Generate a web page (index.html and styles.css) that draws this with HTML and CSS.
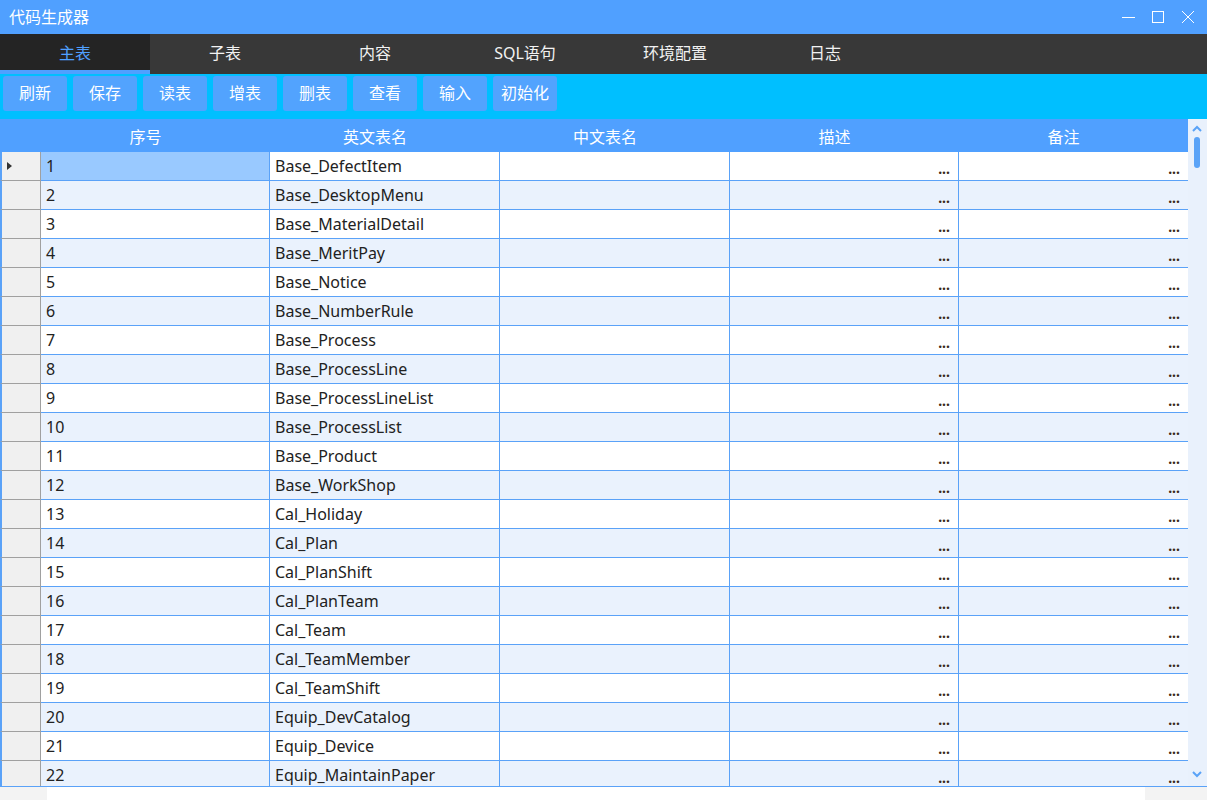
FILE: index.html
```html
<!DOCTYPE html>
<html lang="zh-CN">
<head>
<meta charset="utf-8">
<title>代码生成器</title>
<link rel="stylesheet" href="styles.css">
</head>
<body>
<div class="window">
  <header class="titlebar">
    <span class="title">代码生成器</span>
    <div class="controls">
      <svg class="ctl" width="14" height="14" viewBox="0 0 14 14"><path d="M1 7.5H14" stroke="#fff" stroke-width="1"/></svg>
      <svg class="ctl" width="14" height="14" viewBox="0 0 14 14"><rect x="1.5" y="1.5" width="11" height="11" fill="none" stroke="#fff" stroke-width="1"/></svg>
      <svg class="ctl" width="14" height="14" viewBox="0 0 14 14"><path d="M1 1L13 13M13 1L1 13" stroke="#fff" stroke-width="1"/></svg>
    </div>
  </header>
  <nav class="tabs">
    <div class="tab active">主表</div>
    <div class="tab">子表</div>
    <div class="tab">内容</div>
    <div class="tab">SQL语句</div>
    <div class="tab">环境配置</div>
    <div class="tab">日志</div>
  </nav>
  <div class="toolbar">
    <button class="btn">刷新</button>
    <button class="btn">保存</button>
    <button class="btn">读表</button>
    <button class="btn">增表</button>
    <button class="btn">删表</button>
    <button class="btn">查看</button>
    <button class="btn">输入</button>
    <button class="btn">初始化</button>
  </div>
  <div class="grid">
    <div class="grid-main">
      <div class="row head">
        <div class="cell rh"></div>
        <div class="cell">序号</div>
        <div class="cell">英文表名</div>
        <div class="cell">中文表名</div>
        <div class="cell">描述</div>
        <div class="cell">备注</div>
      </div>
      <div class="body" id="body"></div>
    </div>
    <div class="vscroll">
      <svg class="chev" width="12" height="8" viewBox="0 0 12 8"><path d="M2 6L6 2L10 6" fill="none" stroke="#5aa3f7" stroke-width="2"/></svg>
      <div class="thumb"></div>
      <div class="track"></div>
      <svg class="chev" width="12" height="8" viewBox="0 0 12 8"><path d="M2 2L6 6L10 2" fill="none" stroke="#5aa3f7" stroke-width="2"/></svg>
    </div>
  </div>
  <div class="footer">
    <div class="f-left"></div>
    <div class="f-mid"></div>
    <div class="f-right"></div>
  </div>
</div>
<script>
var names = ["Base_DefectItem","Base_DesktopMenu","Base_MaterialDetail","Base_MeritPay","Base_Notice","Base_NumberRule","Base_Process","Base_ProcessLine","Base_ProcessLineList","Base_ProcessList","Base_Product","Base_WorkShop","Cal_Holiday","Cal_Plan","Cal_PlanShift","Cal_PlanTeam","Cal_Team","Cal_TeamMember","Cal_TeamShift","Equip_DevCatalog","Equip_Device","Equip_MaintainPaper"];
var html = "";
for (var i = 0; i < names.length; i++) {
  var cls = "row" + (i % 2 === 1 ? " alt" : "") + (i === 0 ? " current" : "");
  html += '<div class="' + cls + '">' +
    '<div class="cell rh">' + (i === 0 ? '<span class="tri"></span>' : '') + '</div>' +
    '<div class="cell num">' + (i + 1) + '</div>' +
    '<div class="cell">' + names[i] + '</div>' +
    '<div class="cell"></div>' +
    '<div class="cell dots">...</div>' +
    '<div class="cell dots last">...</div>' +
    '</div>';
}
document.getElementById("body").innerHTML = html;
</script>
</body>
</html>
```
FILE: styles.css
```css
* { box-sizing: border-box; }
html, body { margin: 0; padding: 0; }
body {
  width: 1207px;
  height: 800px;
  overflow: hidden;
  font-family: "Noto Sans", "Noto Sans CJK SC", sans-serif;
  font-size: 16px;
  color: #222;
  background: #fff;
}
.window { display: flex; flex-direction: column; width: 1207px; height: 800px; }

.titlebar {
  height: 34px;
  background: #50a0ff;
  display: flex;
  align-items: center;
  justify-content: space-between;
  padding: 0 0 2px 9px;
  color: #fff;
}
.title { font-family: "Noto Sans CJK SC", sans-serif; font-size: 16px; line-height: 20px; }
.controls { display: flex; align-items: center; gap: 16px; padding: 0 12px 0 0; margin-top: 2px; }
.ctl { display: block; }

.tabs { height: 40px; background: #383838; display: flex; }
.tab {
  width: 150px;
  height: 40px;
  display: flex;
  align-items: center;
  justify-content: center;
  padding-bottom: 4px;
  color: #f2f2f2;
  font-family: "Noto Sans", "Noto Sans CJK SC", sans-serif;
  font-size: 16px;
}
.tab.active { background: #242424; color: #50a0ff; border-bottom: 4px solid #50a0ff; padding-bottom: 0; }

.toolbar {
  height: 45px;
  background: #00bfff;
  display: flex;
  align-items: flex-start;
  gap: 6px;
  padding: 2px 0 0 3px;
}
.btn {
  width: 64px;
  height: 35px;
  border: none;
  border-radius: 3px;
  background: #52a3fe;
  color: #fff;
  font-family: "Noto Sans CJK SC", sans-serif;
  font-size: 16px;
  padding: 0 0 3px 0;
}

.grid { height: 668px; display: flex; border-bottom: 1px solid #5aa2f8; }
.grid-main { width: 1188px; display: flex; flex-direction: column; }
.row {
  display: grid;
  grid-template-columns: 41px 229px 230px 230px 229px 229px;
  height: 29px;
  background: #fff;
}
.row.alt { background: #eaf2fd; }
.cell {
  border-right: 1px solid #5aa2f8;
  border-bottom: 1px solid #5aa2f8;
  padding-left: 5px;
  display: flex;
  align-items: center;
  white-space: nowrap;
  overflow: hidden;
}
.cell.last { border-right: none; }
.row.head { height: 33px; background: #50a0ff; }
.row.head .cell {
  border: none;
  background: #50a0ff;
  justify-content: center;
  padding: 1px 20px 0 0;
  color: #fff;
  font-family: "Noto Sans CJK SC", sans-serif;
}
.body { height: 634px; overflow: hidden; }
.cell.rh {
  background: #f0f0f0;
  border-left: 2px solid #5aa2f8;
  border-right: 1px solid #a0a0a0;
  border-bottom: 1px solid #a0a0a0;
  padding-left: 5px;
}
.row.current .num { background: #99c9ff; }
.tri {
  width: 0; height: 0;
  border-top: 4px solid transparent;
  border-bottom: 4px solid transparent;
  border-left: 5px solid #333;
}
.cell.dots {
  justify-content: flex-end;
  padding-right: 8px;
  padding-top: 4px;
  font-size: 14px;
  font-weight: bold;
  color: #3a2a1a;
}

.vscroll {
  width: 19px;
  background: #e9f1fc;
  display: flex;
  flex-direction: column;
  align-items: center;
  padding: 6px 1px 8px 0;
}
.chev { display: block; }
.thumb { width: 6px; height: 31px; border-radius: 3px; background: #5aa3f7; margin-top: 4px; }
.track { flex: 1; }

.footer { height: 13px; display: flex; }
.f-left { width: 47px; background: #f3f3f3; }
.f-mid { flex: 1; background: #fff; }
.f-right { width: 62px; background: #f3f3f3; }
```
